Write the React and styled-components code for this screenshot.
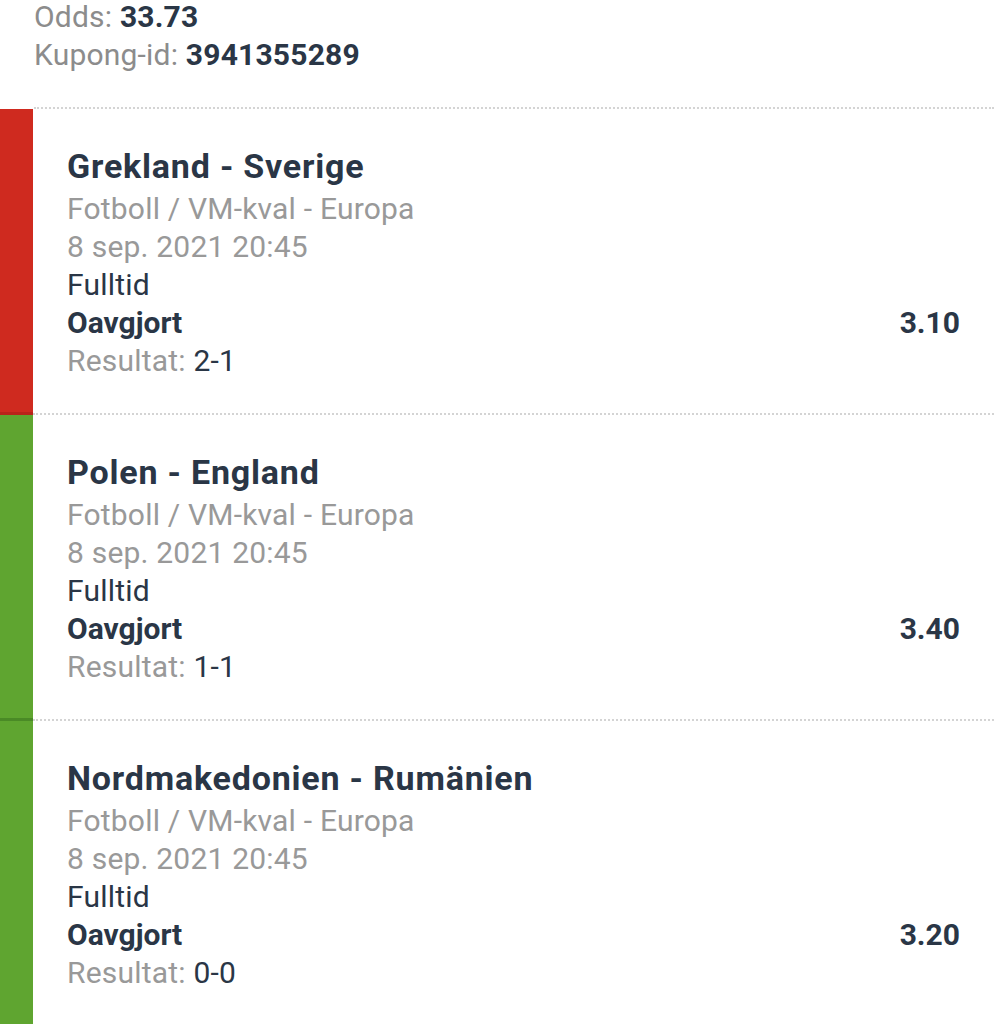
import styled, { createGlobalStyle } from "styled-components";

const GlobalStyle = createGlobalStyle`
  html, body {
    margin: 0;
    padding: 0;
    background: #ffffff;
  }
  body {
    font-family: Roboto, "Liberation Sans", Arial, sans-serif;
    color: #2a3646;
    overflow: hidden;
  }
`;

const Page = styled.div`
  width: 994px;
  height: 1024px;
  overflow: hidden;
  background: #ffffff;
`;

const Summary = styled.div`
  margin: -2px 0 0 34px;
  padding-bottom: 33px;
  border-bottom: 2px dotted #d4d4d4;
`;

const SummaryLine = styled.div`
  font-size: 30px;
  line-height: 38px;
  letter-spacing: 0.2px;
  color: #8c8c8c;

  b {
    color: #2a3646;
    font-weight: 700;
  }
`;

const Row = styled.div`
  display: flex;
  align-items: stretch;
`;

const StatusBar = styled.div`
  width: 33px;
  flex-shrink: 0;
  background: ${(p) => (p.$won ? "#5fa530" : "#cf2a1f")};
  border-bottom: 3px solid ${(p) => (p.$won ? "#4a8a26" : "#b8241a")};
`;

const Content = styled.div`
  flex: 1;
  padding: 35px 34px 33px 34px;
  border-bottom: 2px dotted #d4d4d4;
`;

const Title = styled.div`
  font-size: 34px;
  font-weight: 700;
  line-height: 44px;
  letter-spacing: 0.8px;
  margin-bottom: 2px;
  color: #2a3646;
`;

const Line = styled.div`
  font-size: 30px;
  line-height: 38px;
  letter-spacing: 0.2px;
  color: ${(p) => (p.$muted ? "#999999" : "#2a3646")};
`;

const PickLine = styled.div`
  display: flex;
  justify-content: space-between;
  align-items: center;
  font-size: 30px;
  line-height: 38px;
  font-weight: 700;
`;

const Muted = styled.span`
  color: #999999;
`;

const bets = [
  { match: "Grekland - Sverige", odds: "3.10", result: "2-1", won: false },
  { match: "Polen - England", odds: "3.40", result: "1-1", won: true },
  { match: "Nordmakedonien - Rumänien", odds: "3.20", result: "0-0", won: true },
];

export default function App() {
  return (
    <Page>
      <GlobalStyle />
      <Summary>
        <SummaryLine>
          Odds: <b>33.73</b>
        </SummaryLine>
        <SummaryLine>
          Kupong-id: <b>3941355289</b>
        </SummaryLine>
      </Summary>
      {bets.map((bet) => (
        <Row key={bet.match}>
          <StatusBar $won={bet.won} />
          <Content>
            <Title>{bet.match}</Title>
            <Line $muted>Fotboll / VM-kval - Europa</Line>
            <Line $muted>8 sep. 2021 20:45</Line>
            <Line>Fulltid</Line>
            <PickLine>
              <span>Oavgjort</span>
              <span>{bet.odds}</span>
            </PickLine>
            <Line>
              <Muted>Resultat:</Muted> {bet.result}
            </Line>
          </Content>
        </Row>
      ))}
    </Page>
  );
}
